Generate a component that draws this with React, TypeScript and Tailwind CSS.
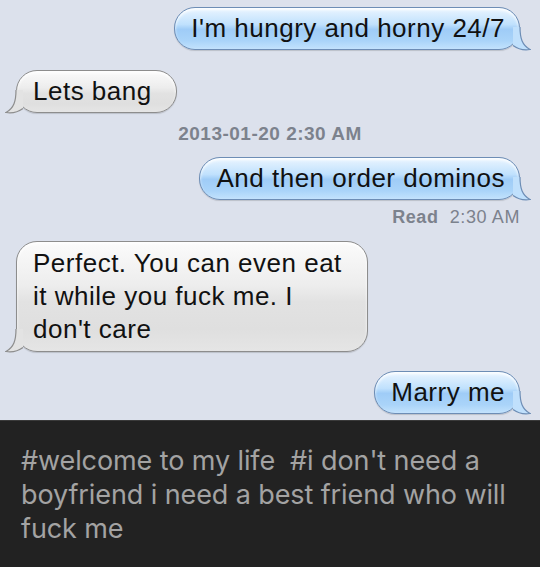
import React from 'react';

const messages = [
  { kind: 'me', text: "I'm hungry and horny 24/7" },
  { kind: 'them', text: 'Lets bang' },
];

// little curl at the bottom corner of a bubble
const Tail = ({ side, fill, stroke }: { side: 'left' | 'right'; fill: string; stroke: string }) => (
  <svg
    width="18"
    height="24"
    viewBox="0 0 18 24"
    className={`absolute bottom-[-1px] z-10 ${side === 'right' ? 'right-[-11px]' : 'left-[-11px] -scale-x-100'}`}
  >
    <path d="M0,0 L7,0 C7,11 9,18 17,22.5 C10,23.5 4,21.5 0,18.5 Z" fill={fill} />
    <path d="M7,0 C7,11 9,18 17,22.5 C10,23.5 4,21.5 0,18.5" fill="none" stroke={stroke} strokeWidth="1.2" />
  </svg>
);

const Bubble = ({ side, children, className = '' }: { side: 'left' | 'right'; children: React.ReactNode; className?: string }) => {
  const blue = side === 'right';
  return (
    <div className={`relative ${className}`}>
      <div
        className={`relative rounded-[21px] border pl-[16px] pr-[14px] py-[5px] text-[26px] tracking-[0.5px] leading-[31px] text-[#111] shadow-[inset_0_2px_3px_rgba(255,255,255,0.9),0_1px_1px_rgba(0,0,0,0.15)] ${
          blue
            ? 'border-[#6d8db5] bg-[linear-gradient(to_bottom,#eaf5ff_0%,#c0e1fd_40%,#9fccf7_52%,#aad4f9_80%,#c2e2fd_100%)]'
            : 'border-[#8d8d8d] bg-[linear-gradient(to_bottom,#fbfbfb_0%,#ededed_40%,#e2e2e2_55%,#dfdfdf_80%,#e5e5e5_100%)]'
        }`}
      >
        {children}
      </div>
      <Tail side={side} fill={blue ? '#c0e0fc' : '#e3e3e3'} stroke={blue ? '#6d8db5' : '#8d8d8d'} />
    </div>
  );
};

export default function App() {
  return (
    <div className="w-[540px] h-[567px] overflow-hidden flex flex-col font-['Liberation_Sans',Arial,sans-serif]">
      <div className="h-[420px] shrink-0 overflow-hidden bg-[#dce1ec] flex flex-col pt-[7px] pr-[20px] pl-[16px]">
        <div className="flex justify-end">
          <Bubble side="right" className="whitespace-nowrap">{messages[0].text}</Bubble>
        </div>
        <div className="flex justify-start mt-[20px]">
          <Bubble side="left" className="whitespace-nowrap w-[161px]">{messages[1].text}</Bubble>
        </div>
        <div className="text-center text-[19px] tracking-[0.5px] font-bold text-[#7c828d] mt-[11px] leading-[20px] pl-[4px]">
          2013-01-20 2:30 AM
        </div>
        <div className="flex justify-end mt-[13px]">
          <Bubble side="right" className="whitespace-nowrap">And then order dominos</Bubble>
        </div>
        <div className="text-right text-[18px] tracking-[0.6px] text-[#7c828d] mt-[7px] leading-[20px]">
          <span className="font-bold">Read</span>&nbsp;&nbsp;2:30 AM
        </div>
        <div className="flex justify-start mt-[14px]">
          <Bubble side="left" className="w-[352px]">
            <div className="leading-[33px]">
              Perfect. You can even eat it while you fuck me. I don't care
            </div>
          </Bubble>
        </div>
        <div className="flex justify-end mt-[19px]">
          <Bubble side="right" className="whitespace-nowrap">Marry me</Bubble>
        </div>
      </div>
      <div className="flex-1 bg-[#222222] border-t border-[#3a3a3a] px-[21px] pt-[23px] text-[27px] leading-[34px] text-[#a3a3a3] font-['Inter',sans-serif] tracking-[-0.1px]">
        #welcome to my life&nbsp;&nbsp;#i don't need a boyfriend i need a best friend who will fuck me
      </div>
    </div>
  );
}
